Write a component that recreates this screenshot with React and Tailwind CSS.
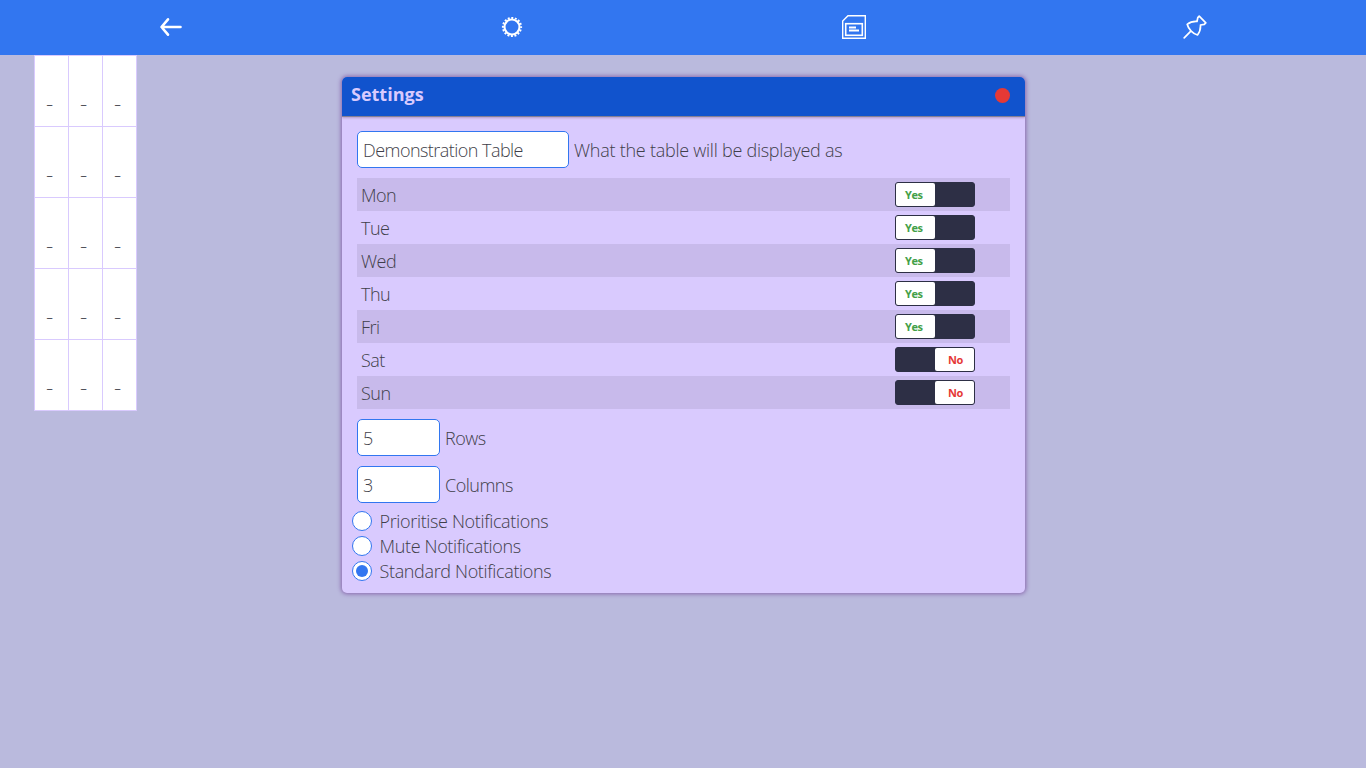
const days = [
  ['Mon', true],
  ['Tue', true],
  ['Wed', true],
  ['Thu', true],
  ['Fri', true],
  ['Sat', false],
  ['Sun', false],
];

function Toggle({ on }) {
  return (
    <div className="flex h-[25px] w-20 overflow-hidden rounded-[3px] border border-[#2d2f45] bg-[#2d2f45] text-[11px] leading-[24px] font-bold">
      {on ? (
        <div className="w-[39px] rounded-r-[2px] bg-white pl-[9px] tracking-[-0.4px] text-[#43a047]">Yes</div>
      ) : (
        <div className="ml-[39px] w-[39px] rounded-l-[2px] bg-white pl-[13px] text-[#e53935]">No</div>
      )}
    </div>
  );
}

function Field({ value, label, wide }) {
  return (
    <label className="flex h-[37px] items-center gap-[5px]">
      <span
        className={`flex h-[37px] items-center rounded-[5px] border border-[#3276f0] bg-white pl-[5px] pt-0.5 ${wide ? 'w-[212px] tracking-[-0.54px]' : 'w-[83px]'}`}
      >
        {value}
      </span>
      <span className={`pt-0.5 ${wide ? 'tracking-[-0.25px]' : 'tracking-[-0.5px]'}`}>{label}</span>
    </label>
  );
}

function Radio({ label, checked }) {
  return (
    <div className="flex h-[25px] items-center">
      <span className="flex size-5 items-center justify-center rounded-full border border-[#3276f0] bg-white">
        {checked && <span className="size-3 rounded-full bg-[#3276f0]" />}
      </span>
      <span className="ml-[7.5px] pt-0.5">{label}</span>
    </div>
  );
}

function GearIcon() {
  return (
    <svg className="size-6" viewBox="0 0 24 24" fill="none" stroke="white">
      <circle cx="12" cy="12" r="7.5" strokeWidth="2.1" />
      <circle cx="12" cy="12" r="9.1" strokeWidth="2" strokeDasharray="2 1.574" strokeDashoffset="1" />
    </svg>
  );
}

export default function App() {
  return (
    <div className="flex h-screen w-full flex-col bg-[#babadd] font-['Open_Sans','Noto_Sans',sans-serif] text-[18px] leading-[25px] font-light tracking-[-0.35px] text-[#3f3f4a]">
      <nav className="grid h-[55px] shrink-0 grid-cols-4 items-center justify-items-center bg-[#3276f0] pb-px">
        <svg className="h-6 w-6" viewBox="0 0 24 24" fill="none" stroke="white" strokeWidth="2.6" strokeLinecap="round" strokeLinejoin="round">
          <path d="M21.5 12H2.7M9 4.3L2.5 12L9 19.7" />
        </svg>
        <GearIcon />
        <svg className="h-6 w-6" viewBox="0 0 24 24" fill="none" stroke="white">
          <path d="M6 .7H23.3V23.3H.7V6Z" strokeWidth="1.4" />
          <rect x="3.7" y="8.7" width="16.6" height="11.6" strokeWidth="1.6" />
          <path d="M7 12.5H14M7 15.5H17" strokeWidth="1.8" />
        </svg>
        <svg className="h-6 w-6" viewBox="0 0 24 24" fill="none" stroke="white" strokeWidth="1.7" strokeLinejoin="round" strokeLinecap="round">
          <path d="M16.2 1.2L22.8 7.8L21.3 9.3L17.5 10C17.7 13.5 16.8 17 14.5 20C10 18.8 5.5 14.5 4.2 9.3C6.8 7.2 10.5 6.3 14 6.5L14.8 2.7Z" />
          <path d="M7.6 16.4L1.2 22.8" />
        </svg>
      </nav>
      <main className="flex items-start">
        <div className="ml-[34px] grid w-[103px] shrink-0 grid-cols-3 gap-px border border-[#d9cafe] bg-[#d9cafe]">
          {Array.from({ length: 15 }, (_, i) => (
            <div key={i} className="flex h-[70px] items-end bg-white pb-[9px] pl-[10.5px]">
              <span className="origin-left scale-x-125">-</span>
            </div>
          ))}
        </div>
        <section className="mt-[22px] ml-[205px] h-[516px] w-[683px] overflow-hidden rounded-[5px] bg-[#d9cafe] shadow-[0_0_4px_1px_#8867ad]">
          <header className="flex h-10 items-start justify-between border-b border-[#858095] bg-[#1153cd] pr-[15px] pl-[9px] shadow-[0_1px_2px_#b39bc8]">
            <h1 className="pt-[5px] text-[18px] font-bold tracking-[0px] text-[#d9cafe]">Settings</h1>
            <span className="mt-[11px] size-[15px] rounded-full bg-[#e53935]" />
          </header>
          <div className="px-[15px] pt-[14px]">
            <Field value="Demonstration Table" label="What the table will be displayed as" wide />
            <div className="my-[10px]">
              {days.map(([day, on]) => (
                <div key={day} className="flex h-[33px] items-start justify-between pt-1 pr-[35px] pl-1 odd:bg-[#c8baeb]">
                  <span className="pt-px tracking-[-0.5px]">{day}</span>
                  <Toggle on={on} />
                </div>
              ))}
            </div>
            <Field value="5" label="Rows" />
            <div className="mt-[10px]">
              <Field value="3" label="Columns" />
            </div>
            <div className="mt-[5px] -ml-[5px]">
              <Radio label="Prioritise Notifications" />
              <Radio label="Mute Notifications" />
              <Radio label="Standard Notifications" checked />
            </div>
          </div>
        </section>
      </main>
    </div>
  );
}
